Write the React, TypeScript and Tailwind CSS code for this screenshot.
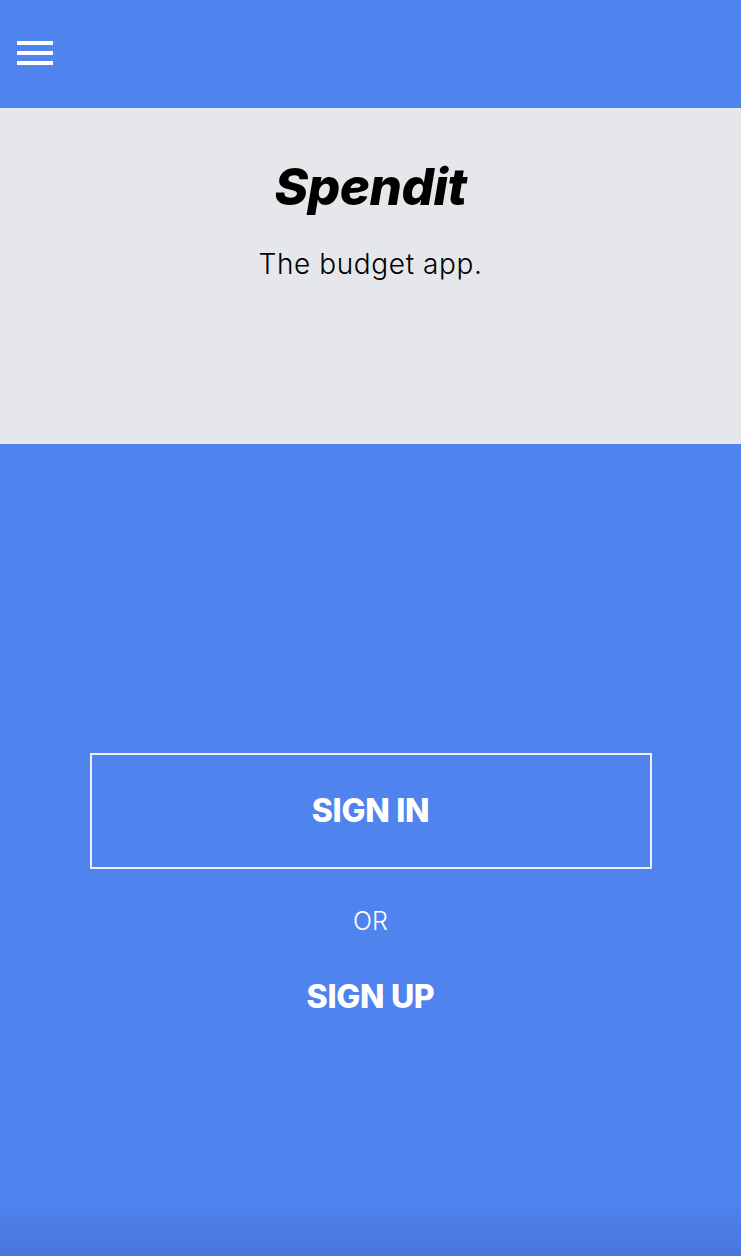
import React from "react";

export default function App() {
  return (
    <div
      className="flex h-[1256px] w-full flex-col bg-[#4f83ee]"
      style={{ fontFamily: 'Inter, "Noto Sans", sans-serif' }}
    >
      <header className="flex h-[108px] shrink-0 items-center bg-[#4f83ee] px-[17px]">
        <button className="flex w-[36px] flex-col gap-[6px] pb-[2px]" aria-label="menu">
          <span className="block h-[4px] w-[36px] bg-white" />
          <span className="block h-[4px] w-[36px] bg-white" />
          <span className="block h-[4px] w-[36px] bg-white" />
        </button>
      </header>
      <section className="flex h-[336px] shrink-0 flex-col items-center bg-[#e5e7eb] pt-[48px]">
        <h1 className="text-[51px] font-extrabold italic leading-[62px] tracking-[-0.5px] text-black">
          Spendit
        </h1>
        <p className="mt-[29px] text-[28px] font-light leading-[34px] tracking-[0.6px] text-black">
          The budget app.
        </p>
      </section>
      <main className="flex flex-1 flex-col items-center bg-gradient-to-b from-[#4f83ee] from-[93%] to-[#4876dd] pt-[309px]">
        <button className="flex h-[116px] w-[562px] items-center justify-center border-2 border-[#eef0f4] text-[32px] font-extrabold tracking-[-0.3px] text-white">
          SIGN IN
        </button>
        <p className="mt-[36px] text-[25px] font-light leading-[32px] text-white">OR</p>
        <button className="mt-[42px] text-[32px] font-extrabold leading-[36px] tracking-[-0.3px] text-white">
          SIGN UP
        </button>
      </main>
    </div>
  );
}
